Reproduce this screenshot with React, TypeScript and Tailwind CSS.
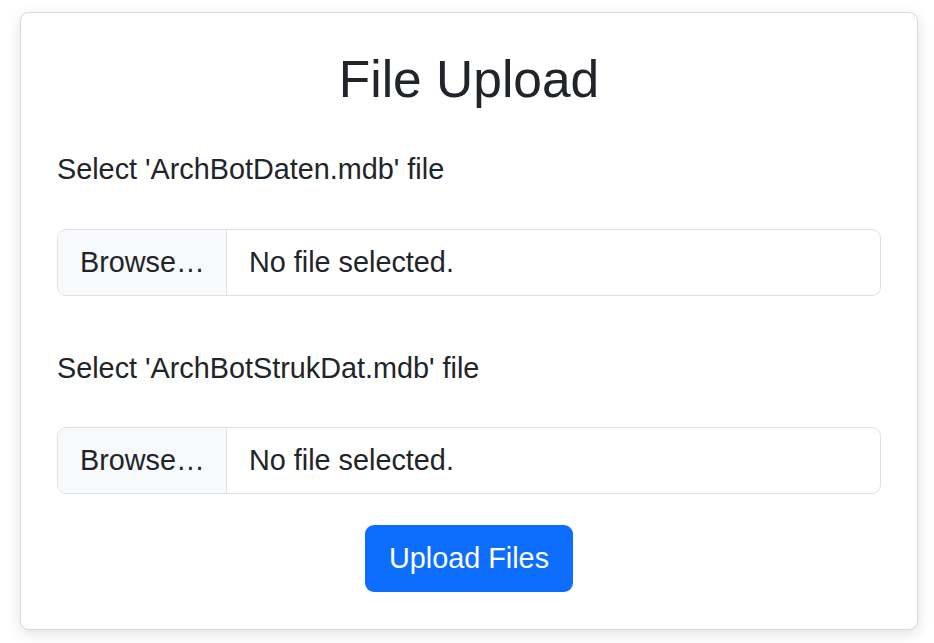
export default function App() {
    const font = { fontFamily: '"Liberation Sans", Arial, sans-serif' };

    return (
        <div className="min-h-screen bg-white pt-[12px] pl-[20px] text-[#212529]" style={font}>
            <div className="w-[898px] rounded-[9px] border-[1.8px] border-[#dadada] bg-white px-[36px] pt-[36px] pb-[37px] shadow-[0_4px_14px_rgba(0,0,0,0.12)]">
                <h3 className="text-center text-[51.5px] leading-[1.2] font-normal">File Upload</h3>

                <form onSubmit={(e) => e.preventDefault()}>
                    <div className="mt-[37.6px]">
                        <label className="block text-[28.8px] leading-[1.5]">
                            Select 'ArchBotDaten.mdb' file
                        </label>
                        <FileInput />
                    </div>

                    <div className="mt-[50.8px]">
                        <label className="block text-[28.8px] leading-[1.5]">
                            Select 'ArchBotStrukDat.mdb' file
                        </label>
                        <FileInput />
                    </div>

                    <div className="mt-[30.5px] flex justify-center">
                        <button
                            type="submit"
                            className="h-[67px] rounded-[9px] bg-[#0d6efd] px-[24px] text-[28.8px] leading-[1.5] text-white"
                        >
                            Upload Files
                        </button>
                    </div>
                </form>
            </div>
        </div>
    );
}

function FileInput() {
    return (
        <div className="mt-[37.4px] flex h-[67px] overflow-hidden rounded-[9px] border-[1.8px] border-[#dee2e6] bg-white text-[28.8px] leading-[1.5]">
            <span className="flex w-[169px] items-center border-r-[1.8px] border-[#dee2e6] bg-[#f8f9fa] pl-[22px]">
                Browse…
            </span>
            <span className="flex items-center pl-[22px]">No file selected.</span>
        </div>
    );
}
